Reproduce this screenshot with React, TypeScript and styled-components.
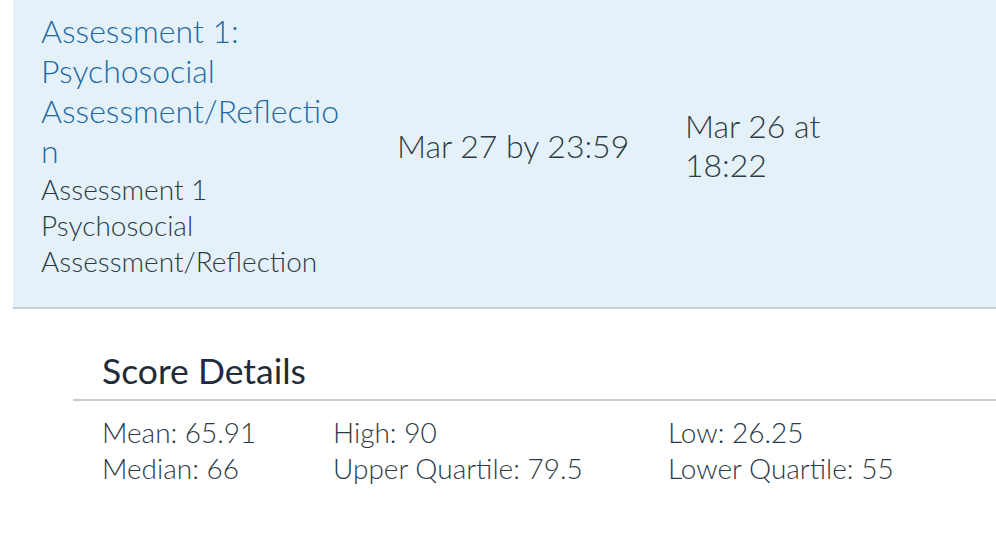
import styled, { createGlobalStyle } from "styled-components";

const Global = createGlobalStyle`
  html, body {
    margin: 0;
    padding: 0;
    background: #ffffff;
  }
  body {
    font-family: Lato, "Liberation Sans", sans-serif;
    font-weight: 300;
    color: #2d3b45;
    overflow: hidden;
  }
`;

const Page = styled.div`
  width: 996px;
  height: 556px;
  padding-left: 13px;
  box-sizing: border-box;
`;

const Row = styled.div`
  display: flex;
  align-items: center;
  background: #e4f1f8;
  border-bottom: 2px solid #c7cdd1;
  padding: 11px 0 28px 28px;
`;

const TitleCell = styled.div`
  width: 356px;
  flex: none;
`;

const TitleBlock = styled.div`
  width: 300px;
`;

const TitleLink = styled.a`
  display: block;
  color: #1e6aa6;
  font-size: 32px;
  line-height: 40px;
  text-decoration: none;
  overflow-wrap: anywhere;
`;

const Subtitle = styled.div`
  font-size: 28px;
  line-height: 36px;
  color: #2d3b45;
`;

const DateCell = styled.div<{ $width: number }>`
  width: ${(p) => p.$width}px;
  flex: none;
  font-size: 32px;
  line-height: 39px;
  color: #2d3b45;
`;

const Details = styled.section`
  margin: 40px 0 0 60px;
`;

const Heading = styled.h2`
  margin: 0;
  padding: 0 0 6px 29px;
  font-size: 35.5px;
  font-weight: 400;
  line-height: 44px;
  color: #1f2d3a;
  border-bottom: 2px solid #c7cdd1;
`;

const Stats = styled.div`
  display: grid;
  grid-template-columns: 231px 335px auto;
  padding: 13px 0 0 29px;
  font-size: 28px;
  line-height: 36px;
  color: #2d3b45;
`;

const stats = [
  "Mean: 65.91",
  "High: 90",
  "Low: 26.25",
  "Median: 66",
  "Upper Quartile: 79.5",
  "Lower Quartile: 55",
];

export default function App() {
  return (
    <Page>
      <Global />
      <Row>
        <TitleCell>
          <TitleBlock>
            <TitleLink href="#">Assessment 1: Psychosocial Assessment/Reflection</TitleLink>
            <Subtitle>Assessment 1 Psychosocial Assessment/Reflection</Subtitle>
          </TitleBlock>
        </TitleCell>
        <DateCell $width={288}>Mar 27 by 23:59</DateCell>
        <DateCell $width={180}>Mar 26 at 18:22</DateCell>
      </Row>
      <Details>
        <Heading>Score Details</Heading>
        <Stats>
          {stats.map((s) => (
            <div key={s}>{s}</div>
          ))}
        </Stats>
      </Details>
    </Page>
  );
}
